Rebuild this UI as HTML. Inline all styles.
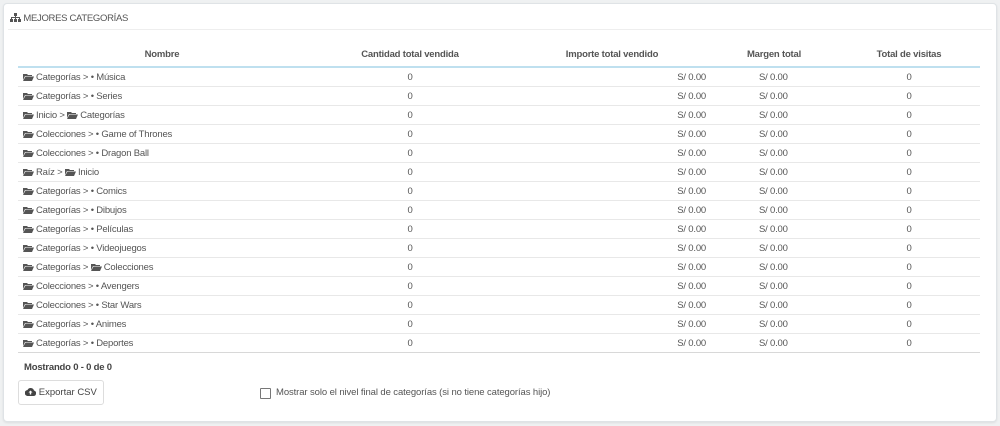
<!DOCTYPE html>
<html><head><meta charset="utf-8"><style>
body{margin:0;width:1000px;height:426px;background:#eff1f2;font-family:"Liberation Sans",sans-serif;color:#555;overflow:hidden;position:relative}
.panel{position:absolute;left:3px;top:3px;width:992px;height:417px;background:#fff;border:1px solid #dfe3e6;border-radius:4px;box-shadow:0 1px 2px rgba(0,0,0,.08)}
.hd{position:absolute;left:6px;top:9px;font-size:9.5px;color:#555;letter-spacing:-0.3px}
.hl{position:absolute;left:4px;right:4px;top:25px;border-top:1px solid #eee}
table{position:absolute;left:14px;top:39px;width:962px;border-collapse:collapse;table-layout:fixed;font-size:9.5px;letter-spacing:-0.2px}
th{height:23px;font-weight:bold;color:#555;text-align:center;border-bottom:2px solid #bfe0ef;padding:0;font-size:9.5px}
td{height:18px;border-bottom:1px solid #e8e8e8;padding:0;white-space:nowrap}
td.n{padding-left:5px}
td.c{text-align:center}
td.r{text-align:right;padding-right:4px}
td.m{padding-left:49px}
tr:last-child td{border-bottom:1px solid #d8d8d8}
.f{display:inline-block;width:11px;height:8px;vertical-align:-1px;margin-right:2px}
.most{position:absolute;left:20px;top:358px;font-size:9.5px;font-weight:bold;color:#444;letter-spacing:-0.2px}
.btn{position:absolute;left:14px;top:376px;width:84px;height:23px;border:1px solid #ddd;border-radius:3px;font-size:9.5px;line-height:23px;text-align:center;color:#444}
.chk{position:absolute;left:256px;top:384px;width:9px;height:9px;border:1px solid #777;border-radius:1px}
.cl{position:absolute;left:272px;top:383px;font-size:9.5px;color:#555;letter-spacing:-0.1px}
</style></head><body>
<div class="panel">
<div class="hd"><svg width="11" height="9" viewBox="0 0 11 9" style="vertical-align:-1px"><rect x="4" y="0" width="3" height="3" fill="#555"/><rect x="1" y="4" width="9" height="1" fill="#555"/><rect x="1" y="4" width="1" height="2" fill="#555"/><rect x="5" y="3" width="1" height="3" fill="#555"/><rect x="9" y="4" width="1" height="2" fill="#555"/><rect x="0" y="6" width="3" height="3" fill="#555"/><rect x="4" y="6" width="3" height="3" fill="#555"/><rect x="8" y="6" width="3" height="3" fill="#555"/></svg> MEJORES CATEGORÍAS</div>
<div class="hl"></div>
<table>
<colgroup><col style="width:288px"><col style="width:208px"><col style="width:196px"><col style="width:128px"><col style="width:142px"></colgroup>
<tr><th>Nombre</th><th>Cantidad total vendida</th><th>Importe total vendido</th><th>Margen total</th><th>Total de visitas</th></tr>
<tr><td class="n"><svg class="f" viewBox="0 0 11 8"><path d="M0 1h4l1 1h4v1H2L0 7z M2.5 3.5H11L9 8H0z" fill="#555"/></svg>Categorías &gt; • Música</td><td class="c">0</td><td class="r">S/ 0.00</td><td class="m">S/ 0.00</td><td class="c">0</td></tr>
<tr><td class="n"><svg class="f" viewBox="0 0 11 8"><path d="M0 1h4l1 1h4v1H2L0 7z M2.5 3.5H11L9 8H0z" fill="#555"/></svg>Categorías &gt; • Series</td><td class="c">0</td><td class="r">S/ 0.00</td><td class="m">S/ 0.00</td><td class="c">0</td></tr>
<tr><td class="n"><svg class="f" viewBox="0 0 11 8"><path d="M0 1h4l1 1h4v1H2L0 7z M2.5 3.5H11L9 8H0z" fill="#555"/></svg>Inicio &gt; <svg class="f" viewBox="0 0 11 8"><path d="M0 1h4l1 1h4v1H2L0 7z M2.5 3.5H11L9 8H0z" fill="#555"/></svg>Categorías</td><td class="c">0</td><td class="r">S/ 0.00</td><td class="m">S/ 0.00</td><td class="c">0</td></tr>
<tr><td class="n"><svg class="f" viewBox="0 0 11 8"><path d="M0 1h4l1 1h4v1H2L0 7z M2.5 3.5H11L9 8H0z" fill="#555"/></svg>Colecciones &gt; • Game of Thrones</td><td class="c">0</td><td class="r">S/ 0.00</td><td class="m">S/ 0.00</td><td class="c">0</td></tr>
<tr><td class="n"><svg class="f" viewBox="0 0 11 8"><path d="M0 1h4l1 1h4v1H2L0 7z M2.5 3.5H11L9 8H0z" fill="#555"/></svg>Colecciones &gt; • Dragon Ball</td><td class="c">0</td><td class="r">S/ 0.00</td><td class="m">S/ 0.00</td><td class="c">0</td></tr>
<tr><td class="n"><svg class="f" viewBox="0 0 11 8"><path d="M0 1h4l1 1h4v1H2L0 7z M2.5 3.5H11L9 8H0z" fill="#555"/></svg>Raíz &gt; <svg class="f" viewBox="0 0 11 8"><path d="M0 1h4l1 1h4v1H2L0 7z M2.5 3.5H11L9 8H0z" fill="#555"/></svg>Inicio</td><td class="c">0</td><td class="r">S/ 0.00</td><td class="m">S/ 0.00</td><td class="c">0</td></tr>
<tr><td class="n"><svg class="f" viewBox="0 0 11 8"><path d="M0 1h4l1 1h4v1H2L0 7z M2.5 3.5H11L9 8H0z" fill="#555"/></svg>Categorías &gt; • Comics</td><td class="c">0</td><td class="r">S/ 0.00</td><td class="m">S/ 0.00</td><td class="c">0</td></tr>
<tr><td class="n"><svg class="f" viewBox="0 0 11 8"><path d="M0 1h4l1 1h4v1H2L0 7z M2.5 3.5H11L9 8H0z" fill="#555"/></svg>Categorías &gt; • Dibujos</td><td class="c">0</td><td class="r">S/ 0.00</td><td class="m">S/ 0.00</td><td class="c">0</td></tr>
<tr><td class="n"><svg class="f" viewBox="0 0 11 8"><path d="M0 1h4l1 1h4v1H2L0 7z M2.5 3.5H11L9 8H0z" fill="#555"/></svg>Categorías &gt; • Películas</td><td class="c">0</td><td class="r">S/ 0.00</td><td class="m">S/ 0.00</td><td class="c">0</td></tr>
<tr><td class="n"><svg class="f" viewBox="0 0 11 8"><path d="M0 1h4l1 1h4v1H2L0 7z M2.5 3.5H11L9 8H0z" fill="#555"/></svg>Categorías &gt; • Videojuegos</td><td class="c">0</td><td class="r">S/ 0.00</td><td class="m">S/ 0.00</td><td class="c">0</td></tr>
<tr><td class="n"><svg class="f" viewBox="0 0 11 8"><path d="M0 1h4l1 1h4v1H2L0 7z M2.5 3.5H11L9 8H0z" fill="#555"/></svg>Categorías &gt; <svg class="f" viewBox="0 0 11 8"><path d="M0 1h4l1 1h4v1H2L0 7z M2.5 3.5H11L9 8H0z" fill="#555"/></svg>Colecciones</td><td class="c">0</td><td class="r">S/ 0.00</td><td class="m">S/ 0.00</td><td class="c">0</td></tr>
<tr><td class="n"><svg class="f" viewBox="0 0 11 8"><path d="M0 1h4l1 1h4v1H2L0 7z M2.5 3.5H11L9 8H0z" fill="#555"/></svg>Colecciones &gt; • Avengers</td><td class="c">0</td><td class="r">S/ 0.00</td><td class="m">S/ 0.00</td><td class="c">0</td></tr>
<tr><td class="n"><svg class="f" viewBox="0 0 11 8"><path d="M0 1h4l1 1h4v1H2L0 7z M2.5 3.5H11L9 8H0z" fill="#555"/></svg>Colecciones &gt; • Star Wars</td><td class="c">0</td><td class="r">S/ 0.00</td><td class="m">S/ 0.00</td><td class="c">0</td></tr>
<tr><td class="n"><svg class="f" viewBox="0 0 11 8"><path d="M0 1h4l1 1h4v1H2L0 7z M2.5 3.5H11L9 8H0z" fill="#555"/></svg>Categorías &gt; • Animes</td><td class="c">0</td><td class="r">S/ 0.00</td><td class="m">S/ 0.00</td><td class="c">0</td></tr>
<tr><td class="n"><svg class="f" viewBox="0 0 11 8"><path d="M0 1h4l1 1h4v1H2L0 7z M2.5 3.5H11L9 8H0z" fill="#555"/></svg>Categorías &gt; • Deportes</td><td class="c">0</td><td class="r">S/ 0.00</td><td class="m">S/ 0.00</td><td class="c">0</td></tr>
</table>
<div class="most">Mostrando 0 - 0 de 0</div>
<div class="btn"><svg width="11" height="9" viewBox="0 0 11 9" style="vertical-align:-1px"><path d="M3 9a3 3 0 0 1-.5-6A3.5 3.5 0 0 1 9 3.5 2.8 2.8 0 0 1 8.5 9z" fill="#444"/><path d="M5.5 3.5l-2 2h1.3v2h1.4v-2h1.3z" fill="#fff"/></svg> Exportar CSV</div>
<div class="chk"></div>
<div class="cl">Mostrar solo el nivel final de categorías (si no tiene categorías hijo)</div>
</div>
</body></html>
